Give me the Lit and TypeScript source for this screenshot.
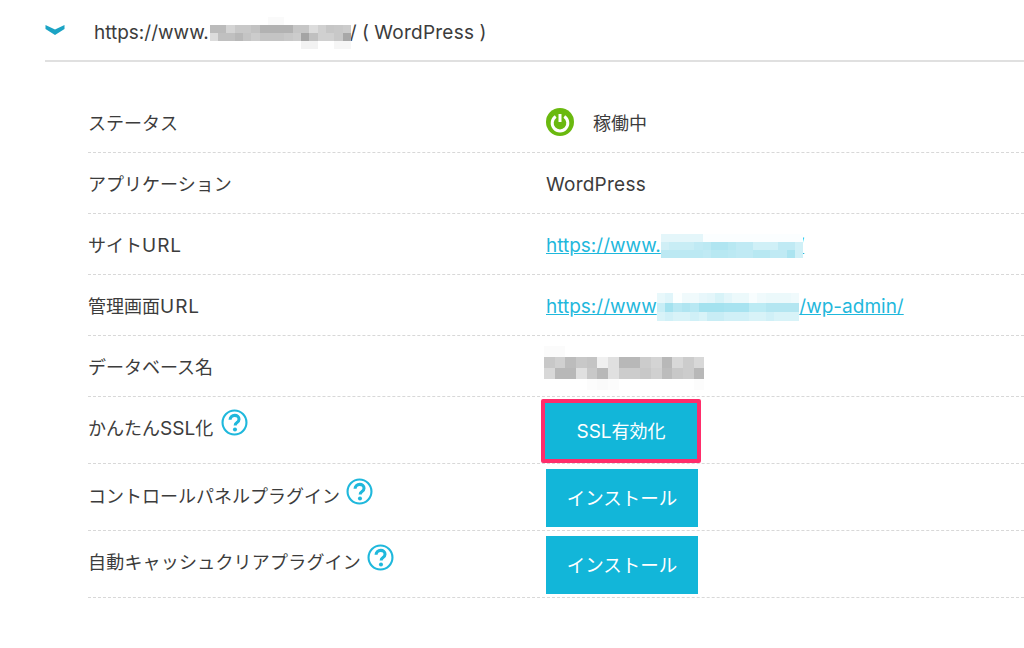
import { LitElement, html, css } from "lit";
import { customElement, property } from "lit/decorators.js";

@customElement("mosaic-block")
export class MosaicBlock extends LitElement {
  @property({ type: Array }) rows: string[][] = [];
  @property({ type: Number }) cell = 8;
  @property({ type: Number }) rowh = 8;
  static styles = css`
    :host { display: inline-block; vertical-align: middle; position: relative; background: #fff; margin-top: -14px; margin-bottom: -14px; }
    .grid { display: grid; filter: blur(0.6px); }
    .c { display: block; }
  `;
  render() {
    const cols = this.rows[0]?.length ?? 0;
    return html`<div class="grid" style="grid-template-columns:repeat(${cols},${this.cell}px);grid-auto-rows:${this.rowh}px">
      ${this.rows.flat().map((c) => html`<span class="c" style="background:#${c}"></span>`)}
    </div>`;
  }
}

const grey = (s: string) => s.split(" ").map((v) => v + v + v);
const split = (s: string) => s.split(" ");

const HEAD = [
  grey("ff ff ff ff ff ff ff fa fa ff ff ff ff ff ff ff ff"),
  grey("bb bb d4 c8 c8 c2 b2 b2 b2 b2 c6 c6 dc d0 c6 c8 cc"),
  grey("dc c0 c0 b8 c4 cc c4 c4 c4 c8 cc a4 c0 d0 d0 c8 a8"),
  grey("ff ff ff ff ff ff ff ff ff ff ff f2 f2 ff ff f6 f6"),
];
const SITE = [
  split("e4f6fa e4f6fa e4f6fa e4f6fa e4f6fa fbfeff fbfeff fbfeff fbfeff fbfeff fbfeff fbfeff fbfeff fbfeff fbfeff fbfeff fbfeff"),
  split("d0eff6 c8edf5 c8edf5 c8edf5 c0eaf4 bce9f3 b0e5f1 b0e5f1 b8e8f2 c0eaf4 c0eaf4 d0f0f7 d0f0f7 d0f0f7 c0eaf4 c0eaf4 d0f0f7"),
  split("bce9f3 bce9f3 bce9f3 bce9f3 bce9f3 c0eaf4 b8e8f2 b8e8f2 bce9f3 c0eaf4 c0eaf4 b8e8f2 b8e8f2 c0eaf4 c0eaf4 ace4f0 d0f0f7"),
];
const ADMIN = [
  split("e8f8fb e0f5fa fcffff f0fafc f0fafc e8f7fb e4f6fa d8f3f8 e4f6fa ecf9fb ecf9fb f8fdfe f0fafc ecf9fb ecf9fb ecf9fb f0fafc"),
  split("c8eef6 a4e2ef b8e8f3 b0e5f1 b8e8f3 a4e2ef a4e2ef a4e2ef a8e3f0 a8e3f0 a8e3f0 bcebf4 bcebf4 b4e6f1 b4e6f1 b4e6f1 b4e6f1"),
  split("d8f3f8 d0f0f7 d8f3f8 d8f3f8 d0f0f7 d8f3f8 c8edf5 c8edf5 d0f0f7 d0f0f7 d0f0f7 d8f3f8 d8f3f8 d0f0f7 d8f3f8 d8f3f8 d8f3f8"),
];
const DB = [
  grey("fb fb ff ff ff ff ff ff ff ff ff ff ff ff ff"),
  grey("c8 d0 bc c8 c4 f0 e0 b8 b8 cc d4 b8 d8 cc d8"),
  grey("d8 b8 b8 e0 c8 b8 e0 cc cc c8 d0 bc c8 cc b8"),
  grey("ff ff ff ff fc fa fc ff ff ff ff ff ff ff fc"),
];

const qIcon = (cls = "") => html`<svg class="q ${cls}" viewBox="0 0 28 28" width="27" height="27"><circle cx="14" cy="14" r="12.400" fill="none" stroke="#1fb8dc" stroke-width="2.200"/><path d="M9.400 11.200c0-2.800 2.100-4.600 4.800-4.600 2.600 0 4.500 1.600 4.500 3.900 0 1.800-1 2.800-2.400 3.800-1.200.8-1.600 1.400-1.600 2.800" fill="none" stroke="#1fb8dc" stroke-width="3.200"/><circle cx="14.500" cy="21.200" r="2.100" fill="#1fb8dc"/></svg>`;

@customElement("app-root")
export class AppRoot extends LitElement {
  static styles = css`
    :host { display: block; width: 1024px; height: 648px; overflow: hidden; background: #fff; color: #3c3c3c;
      font-family: Inter, "Noto Sans CJK JP", sans-serif; font-size: 18px; }
    .head { display: flex; align-items: center; height: 60px; margin-left: 45px; border-bottom: 2px solid #e0e0e0; }
    .head-text { padding-top: 4px; }
    .chev { display: block; margin-right: 29px; }
    .rows { margin: 30px 0 0 88px; }
    .row { display: flex; align-items: center; height: 60px; border-bottom: 1px dashed #d8d8d8; }
    .row.b { height: 66px; }
    .label { width: 458px; flex: none; display: flex; align-items: center; gap: 6px; box-sizing: border-box; }
    .b .label { padding-bottom: 6px; }
    .wide { letter-spacing: 0.2px; }
    .q { display: block; margin-top: -8px; }
    .q.up { margin-top: -10px; margin-left: 2px; }
    .ctl { padding-top: 2px; }
    .l { font-size: 19px; }
    .u { letter-spacing: 1px; }
    .wp { letter-spacing: 0.25px; }
    .val { margin-top: 2px; }
    a { color: #1fb8dc; text-decoration: underline; }
    .head-m { margin-left: 1px; margin-right: -1px; }
    .site-m { margin-right: -6px; }
    .db-m { margin-left: -2px; margin-top: -4px; margin-bottom: -7px; }
    .btn { box-sizing: border-box; width: 152px; height: 58px; margin-top: 2px; padding-bottom: 2px; background: #12b6d9; color: #fff; font-size: 18.500px; display: flex; align-items: center; justify-content: center; }
    .mark { width: 160px; height: 64px; margin-left: -5px; margin-top: 2px; border: 4px solid #ff2d6b; border-radius: 2px; font-size: 18px; }
    .status { display: flex; align-items: center; gap: 19px; }
    .power { display: block; }
  `;
  render() {
    return html`
      <div class="head">
        <svg class="chev" width="20" height="12" viewBox="0 0 20 12"><path d="M.5 1L10 5.600 19.500 1v4L10 11 .5 5z" fill="#1ba3c4"/></svg>
        <span class="head-text l">https://www.<mosaic-block class="head-m" .rows=${HEAD} cell="8.300" rowh="8"></mosaic-block>/ ( <span class="wp">WordPress</span> )</span>
      </div>
      <div class="rows">
        <div class="row"><div class="label">ステータス</div><div class="status">
          <svg class="power" width="28" height="28" viewBox="0 0 28 28"><circle cx="14" cy="14" r="14" fill="#6ab90f"/><path d="M9.700 8.600a7.800 7.800 0 1 0 8.600 0" fill="none" stroke="#fff" stroke-width="3"/><path d="M14 6v8" stroke="#fff" stroke-width="3"/></svg>
          <span>稼働中</span></div></div>
        <div class="row"><div class="label">アプリケーション</div><div class="l wp val">WordPress</div></div>
        <div class="row"><div class="label"><span>サイト<span class="l u">URL</span></span></div><a class="l val">https://www.<mosaic-block class="site-m" .rows=${SITE} cell="8.400" rowh="8"></mosaic-block>/</a></div>
        <div class="row"><div class="label"><span>管理画面<span class="l u">URL</span></span></div><a class="l val">https://www<mosaic-block .rows=${ADMIN} cell="8.400" rowh="9.300"></mosaic-block>/wp-admin/</a></div>
        <div class="row"><div class="label">データベース名</div><mosaic-block class="db-m" .rows=${DB} cell="10.700" rowh="11"></mosaic-block></div>
        <div class="row b"><div class="label"><span>かんたん<span class="l">SSL</span>化</span>${qIcon("up")}</div><div class="btn mark"><span><span class="l">SSL</span>有効化</span></div></div>
        <div class="row b"><div class="label ctl"><span>コントロールパネルプラグイン</span>${qIcon()}</div><div class="btn">インストール</div></div>
        <div class="row b"><div class="label"><span class="wide">自動キャッシュクリアプラグイン</span>${qIcon()}</div><div class="btn">インストール</div></div>
      </div>`;
  }
}
